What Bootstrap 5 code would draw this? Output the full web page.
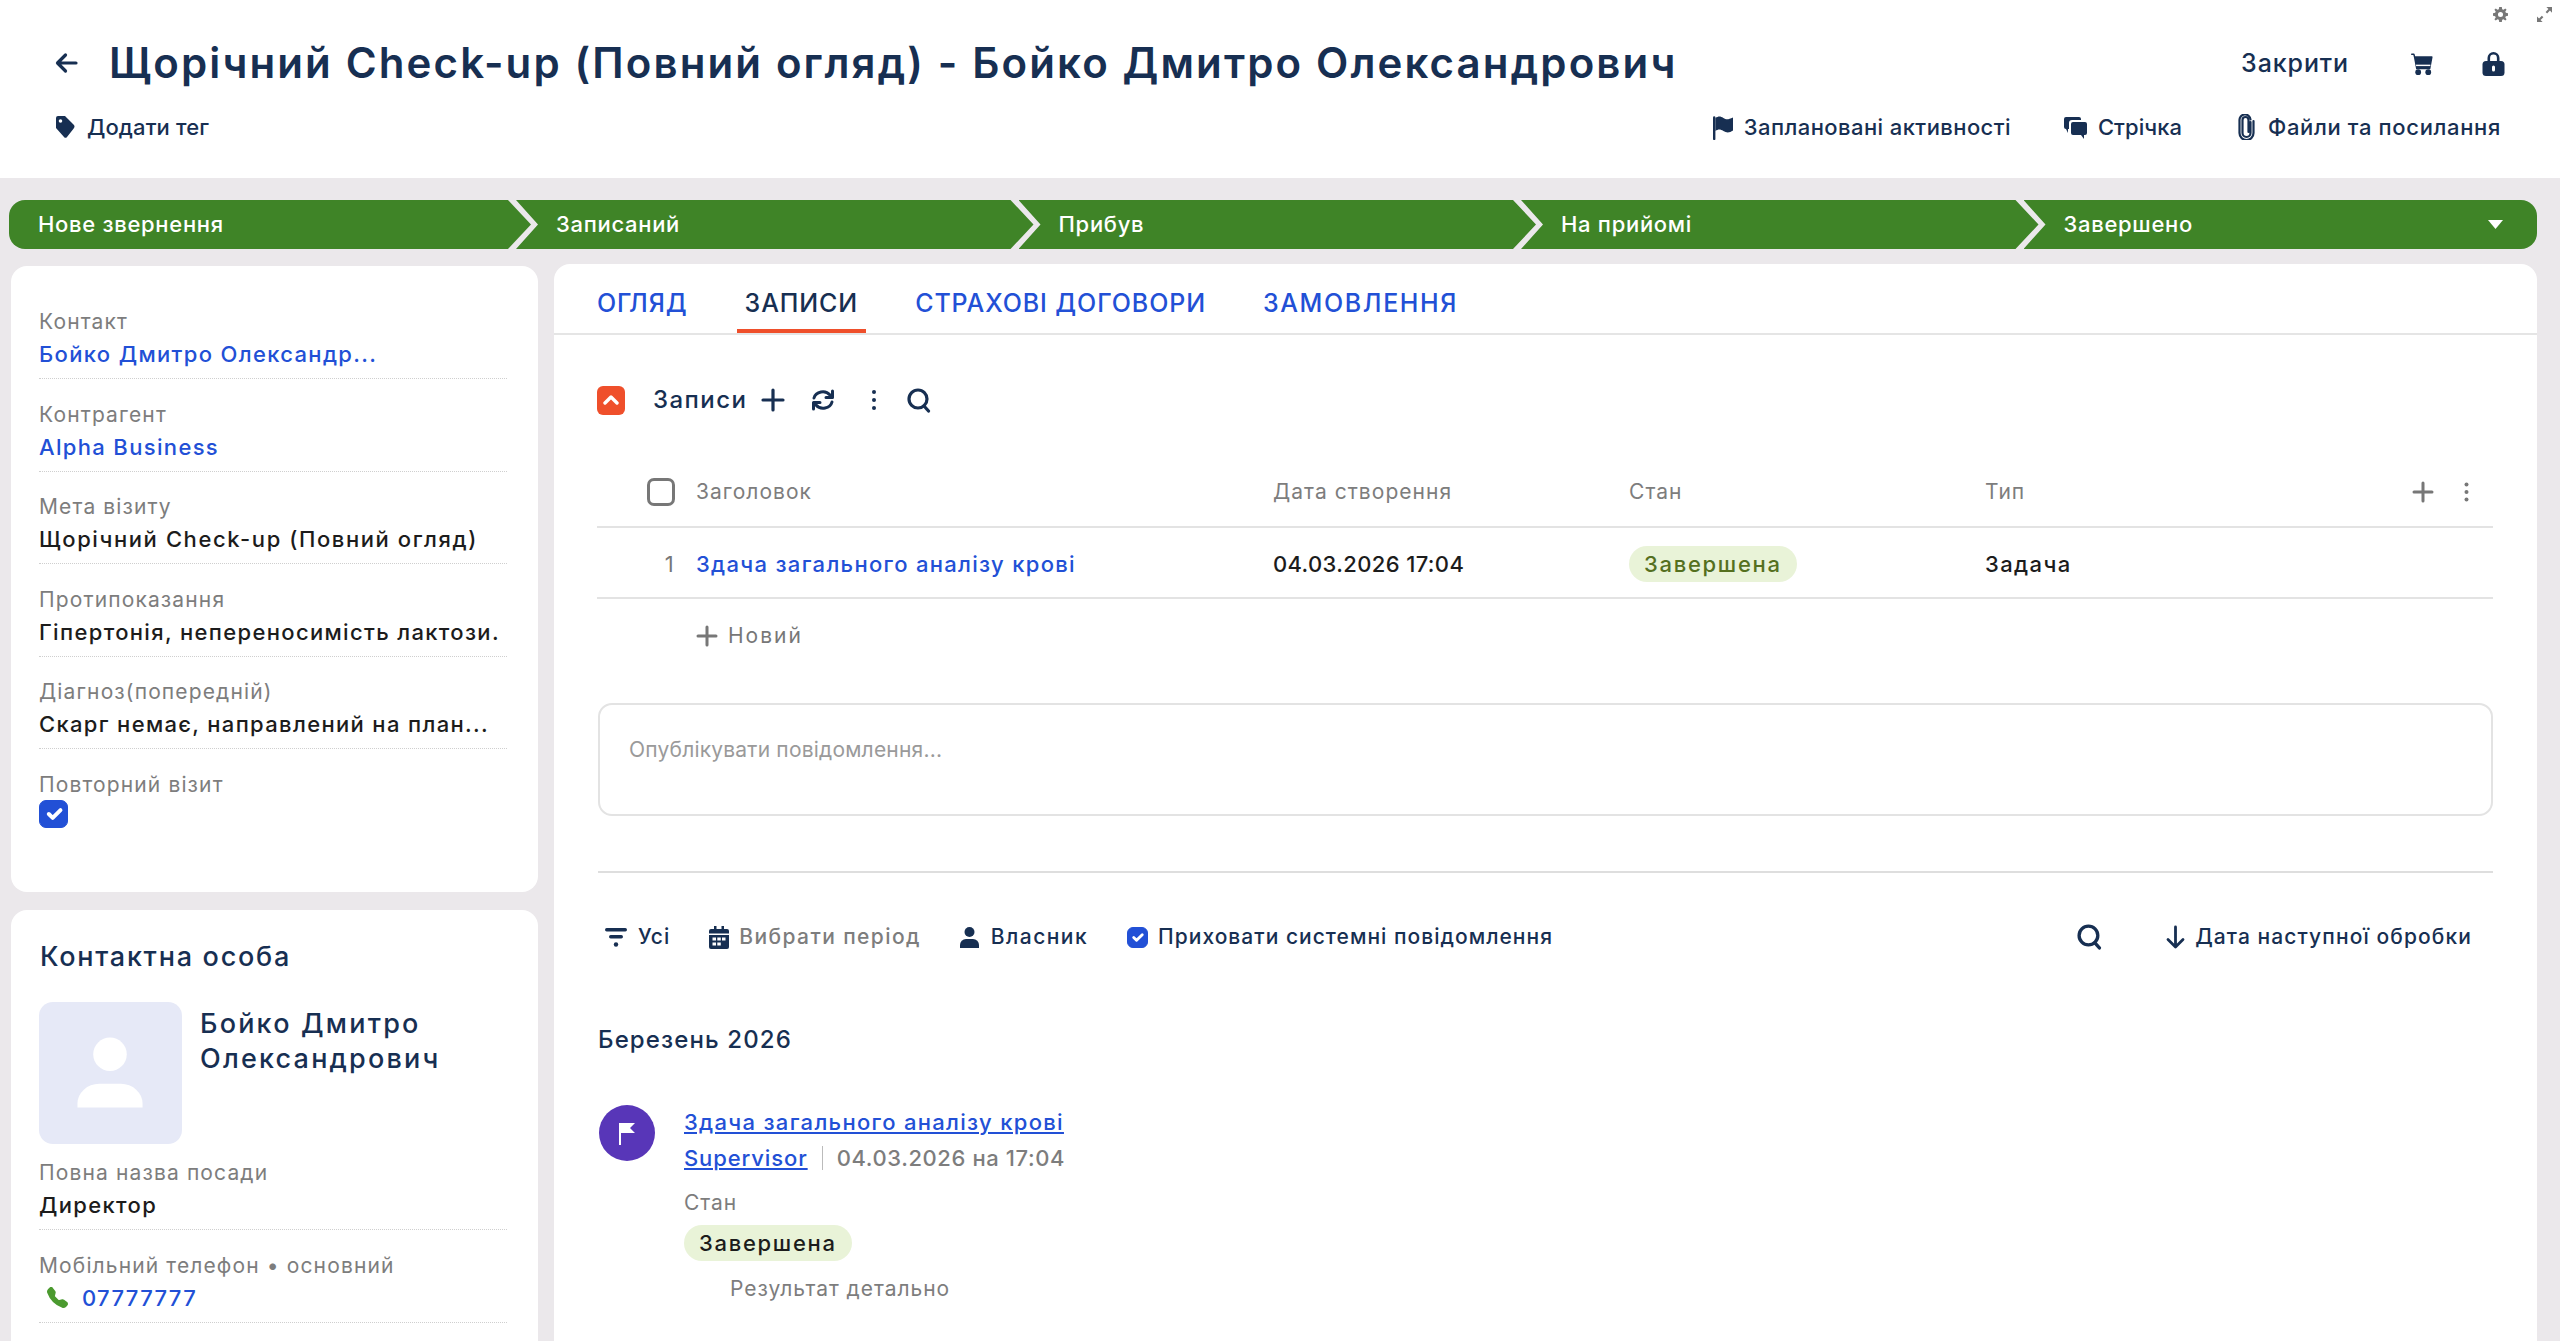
<!DOCTYPE html>
<html lang="uk">
<head>
  <meta charset="UTF-8">
  <title>Щорічний Check-up</title>
  <link href="https://cdn.jsdelivr.net/npm/bootstrap@5.3.0/dist/css/bootstrap.min.css" rel="stylesheet">
  <style>
    html, body { height: 100%; }
    body { font-family: Inter, "Liberation Sans", sans-serif; background: #ebe8eb; color: #172f52; overflow: hidden; }
    a { color: #2250d6; }
    svg { display: block; flex: none; }

    .page-head { background: #fff; height: 178px; padding: 38px 55px 0; position: relative; }
    .corner-tools { position: absolute; top: 7px; right: 8px; display: flex; gap: 29px; }
    .head-top { height: 50px; }
    .head-title { font-size: 42px; font-weight: 600; letter-spacing: 2.13px; margin: 0 0 0 31px; color: #172f52; white-space: nowrap; }
    .head-close { font-size: 25px; font-weight: 500; letter-spacing: .9px; margin-left: auto; margin-right: 62px; padding-top: 2px; }
    .head-sub { height: 40px; margin-top: 19px; padding-right: 4px; font-size: 22px; font-weight: 500; }
    .head-act { display: flex; align-items: center; gap: 11px; }
    .head-files { gap: 13px; }
    .ls-tag { margin-left: 1px; letter-spacing: .1px; }
    .ls-plan { letter-spacing: .42px; margin-right: 53px; }
    .ls-feed { letter-spacing: .04px; margin-right: 56px; }
    .ls-files { letter-spacing: .65px; }

    .stage-bar { padding: 22px 23px 0 9px; height: 71px; flex: none; }
    .stage { height: 49px; width: 517.5px; flex: none; margin-left: -15px; background: #3f8427; color: #fff; font-size: 22px; font-weight: 500; letter-spacing: .7px; padding-left: 40px;
      clip-path: polygon(0 0, calc(100% - 23px) 0, 100% 50%, calc(100% - 23px) 100%, 0 100%, 22px 50%); }
    .stage-first { margin-left: 0; width: 522px; border-radius: 16px 0 0 16px; padding-left: 29px; clip-path: polygon(0 0, calc(100% - 23px) 0, 100% 50%, calc(100% - 23px) 100%, 0 100%); }
    .stage-last { flex: 1; width: auto; border-radius: 0 16px 16px 0; padding-right: 34px; clip-path: polygon(0 0, 100% 0, 100% 100%, 0 100%, 22px 50%); }

    .work { flex: 1; min-height: 0; padding: 15px 23px 0 11px; gap: 16px; }
    .side { width: 527px; flex: none; margin-top: 2px; gap: 18px; }
    .side-card { background: #fff; border-radius: 16px; padding: 0 31px 0 28px; }
    .side-main { height: 626px; padding-top: 42px; flex: none; }
    .side-person { flex: 1; padding-top: 29px; border-radius: 16px 16px 0 0; }
    .field { border-bottom: 1px dotted #cfcfcf; margin-bottom: 21.6px; padding-bottom: 8px; }
    .field-label { height: 28px; line-height: 28px; font-size: 21px; letter-spacing: 1.13px; color: #7d7d7d; white-space: nowrap; }
    .field-value { height: 32px; line-height: 32px; margin-top: 2px; font-size: 22px; font-weight: 500; letter-spacing: 1.34px; color: #1c1c1c; white-space: nowrap; }
    .field-value a { text-decoration: none; }
    .ls-goal { letter-spacing: 1.59px; }
    .form-check-input.repeat-check { width: 29px; height: 28px; margin: 1px 0 0; border-radius: 7px; background-color: #2250d6; border-color: #2250d6; display: block; }
    .person-head { font-size: 27px; font-weight: 500; letter-spacing: 1.73px; height: 36px; line-height: 36px; margin: 0 0 27px 1px; color: #172f52; }
    .person-photo { width: 143px; height: 142px; background: #e6e9f7; border-radius: 14px; flex: none; }
    .person-name { font-size: 27px; font-weight: 500; letter-spacing: 2.2px; line-height: 35px; margin: 4px 0 0 18px; color: #172f52; }
    .person-row { margin-bottom: 15px; }
    .phone-link { margin-left: 8px; gap: 14px; }

    .main-card { background: #fff; flex: 1; min-width: 0; border-radius: 16px 16px 0 0; }
    .tab-strip { padding-left: 35px; gap: 41px; border-bottom: 2px solid #e5e5e5; height: 71px; flex-wrap: nowrap; }
    .tab-strip .nav-link { color: #2250d6; font-size: 25px; font-weight: 500; letter-spacing: .9px; line-height: 36px; padding: 21px 8px 8px; border-bottom: 4px solid transparent; }
    .tab-strip .nav-link.active { color: #172f52; border-bottom-color: #ef4f2b; }
    .tab-strip .nav-link.ls-wide { letter-spacing: 1.6px; }
    .main-body { padding: 45px 44px 0 43px; }

    .rec-bar { height: 40px; font-size: 24px; font-weight: 500; letter-spacing: 1.46px; margin-bottom: 37px; }
    .rec-toggle { width: 28px; height: 29px; background: #ef4f2b; border-radius: 6px; margin-right: 28px; }
    .rec-plus { margin-left: 14px; }
    .rec-sync { margin-left: 26px; }
    .rec-dots { margin-left: 36px; }
    .rec-find { margin-left: 30px; }

    .rec-table { table-layout: fixed; margin: 0; }
    .table.rec-table > * > * > * { border-color: #e3e3e3; border-bottom-width: 2px; padding: 0; vertical-align: top; color: #1c1c1c; line-height: 36px; }
    .table.rec-table > thead > tr > th { height: 70px; padding-top: 17px; font-size: 21px; font-weight: 400; letter-spacing: 1.04px; color: #7d7d7d; }
    .table.rec-table > tbody > tr > td { height: 71px; padding-top: 18px; font-size: 22px; font-weight: 500; letter-spacing: .36px; }
    .table.rec-table > tbody > tr > td.row-type { letter-spacing: 1.4px; }
    .col-num { width: 99px; }
    .col-title { width: 577px; }
    .col-date, .col-state { width: 356px; }
    .form-check-input.all-check { width: 28px; height: 28px; margin: 4px 0 0 50px; border: 3px solid #777; border-radius: 7px; display: block; }
    .table.rec-table > tbody > tr > td.row-num { color: #777; font-weight: 400; padding-right: 22px; text-align: right; }
    .row-link { text-decoration: none; letter-spacing: 1.31px; }
    .state-pill { display: inline-block; height: 36px; line-height: 36px; padding: 0 15px; background: #e9f3d8; letter-spacing: 1.7px; font-size: 22px; font-weight: 500; vertical-align: top; }
    .rec-table td .state-pill { color: #55701f; }
    .head-tools { padding-right: 24px; gap: 24px; }
    .head-icons { gap: 30px; }
    .rec-new { height: 74px; margin-bottom: 30px; padding-left: 99px; gap: 10px; font-size: 21px; letter-spacing: 2px; color: #777; }

    .post-box { height: 113px; width: calc(100% - 1px); margin-left: 1px; border: 2px solid #e3e3e3; border-radius: 14px; padding: 30px 29px 0; font-size: 21px; line-height: 30px; letter-spacing: .2px; resize: none; }
    .post-box::placeholder { color: #9a9a9a; }
    .feed-rule { margin: 55px 0 44px 1px; border-top: 2px solid #dedede; opacity: 1; }

    .feed-filters { height: 40px; padding-left: 7px; font-size: 21px; font-weight: 500; letter-spacing: 1.02px; margin-bottom: 65px; white-space: nowrap; }
    .feed-filter { gap: 10px; margin-right: 39px; }
    .feed-owner { gap: 12px; letter-spacing: 1.45px; }
    .feed-muted { color: #7d7d7d; letter-spacing: 1.4px; }
    .form-check-input.hide-check { width: 21px; height: 21px; margin: 0; border-radius: 6px; background-color: #2250d6; border-color: #2250d6; }
    .feed-sort { gap: 10px; margin-left: 64px; margin-right: 21px; letter-spacing: 1.1px; }
    .feed-month { height: 36px; line-height: 36px; margin-left: 1px; font-size: 24px; font-weight: 500; letter-spacing: 1.12px; margin-bottom: 47px; color: #172f52; }
    .feed-dot { width: 56px; height: 56px; background: #5836b8; margin: 0 29px 0 2px; flex: none; }
    .feed-line { height: 35px; line-height: 34px; font-size: 22px; font-weight: 500; letter-spacing: 1.31px; white-space: nowrap; }
    .feed-user { letter-spacing: .9px; }
    .feed-sep { border-left: 1px solid #bbb; height: 24px; margin: 0 14px; }
    .feed-date { color: #7d7d7d; letter-spacing: .6px; }
    .feed-caption { height: 28px; line-height: 28px; font-size: 21px; letter-spacing: .95px; color: #7d7d7d; margin-top: 14px; }
    .feed-pill { margin-top: 8px; color: #1c1c1c; }
    .feed-detail { margin-left: 46px; }
  </style>
</head>
<body class="d-flex flex-column">
  <header class="page-head">
    <div class="corner-tools">
      <svg width="15" height="15" viewBox="0 0 16 16" fill="#777"><path d="M9.4 0 9.8 2.3 11.2 2.9 13.100 1.500 14.500 2.900 13.100 4.800 13.700 6.200 16 6.600V9.400L13.700 9.800 13.100 11.200 14.500 13.100 13.100 14.500 11.200 13.100 9.800 13.700 9.400 16H6.600L6.200 13.700 4.800 13.100 2.900 14.500 1.500 13.100 2.900 11.200 2.300 9.800 0 9.400V6.600L2.300 6.200 2.900 4.800 1.500 2.900 2.900 1.500 4.800 2.900 6.200 2.300 6.600 0ZM8 5.300A2.700 2.700 0 1 0 8 10.700 2.700 2.700 0 0 0 8 5.300Z"/></svg>
      <svg width="15" height="15" viewBox="0 0 16 16" fill="#777"><path d="M10 0h6v6l-2.200-2.200-3 3-1.600-1.600 3-3zM0 16v-6l2.200 2.200 3-3 1.600 1.600-3 3L6 16z"/></svg>
    </div>
    <div class="head-top d-flex align-items-center">
      <svg width="23" height="22" viewBox="0 0 23 22" fill="none" stroke="#172f52" stroke-width="3.200" stroke-linecap="round" stroke-linejoin="round"><path d="M21 11H3M10.500 3 2.500 11l8 8"/></svg>
      <h1 class="head-title">Щорічний Check-up (Повний огляд) - Бойко Дмитро Олександрович</h1>
      <span class="head-close">Закрити</span>
      <svg width="23" height="23" viewBox="0 0 16 16" fill="#172f52" class="me-5"><path d="M0 1.500A.5.5 0 0 1 .5 1H2a.5.5 0 0 1 .485.379L2.890 3H14.500a.5.5 0 0 1 .491.592l-1.500 8A.5.5 0 0 1 13 12H4a.5.5 0 0 1-.491-.408L2.010 3.607 1.610 2H.5a.5.5 0 0 1-.5-.5z"/><circle cx="5" cy="14" r="2"/><circle cx="12" cy="14" r="2"/><path d="M3.500 9.300h10" stroke="#fff" stroke-width="1"/></svg>
      <svg width="23" height="25" viewBox="0 0 23 25" fill="#172f52"><path d="M5.500 11V7a6 6 0 0 1 12 0v4h-2.600V7a3.400 3.400 0 0 0-6.800 0v4z"/><rect x="0.500" y="10" width="22" height="15" rx="3.500"/><rect x="10" y="14.500" width="3" height="6" rx="1.500" fill="#fff"/></svg>
    </div>
    <div class="head-sub d-flex align-items-center justify-content-between">
      <span class="head-act">
        <svg width="20" height="24" viewBox="0 0 20 24" fill="#172f52"><path d="M1 3a2 2 0 0 1 2-2h7l8.500 8.500a3 3 0 0 1 0 4.200L12 22a2 2 0 0 1-3 0L1 13zM5.500 4.200a1.800 1.800 0 1 0 0 3.600 1.800 1.800 0 0 0 0-3.600z"/></svg>
        <span class="ls-tag">Додати тег</span>
      </span>
      <span class="d-flex">
        <span class="head-act">
          <svg width="20" height="25" viewBox="0 0 20 25" fill="#172f52"><path d="M0 2.500a1.200 1.200 0 0 1 2.400 0V24a1.200 1.200 0 0 1-2.400 0z"/><path d="M2.400 3c3-2 5-2 8 0s5 1.500 9.600-.5v13c-3.500 2.500-6.500 2.500-9.600.5s-5.200-2-8 0z"/></svg>
          <span class="ls-plan">Заплановані активності</span>
        </span>
        <span class="head-act">
          <svg width="23" height="24" viewBox="0 0 23 24" fill="#172f52"><path d="M2 2h13a2 2 0 0 1 2 2v1H8a3 3 0 0 0-3 3v6H4v4l-2-4a2 2 0 0 1-2-2V4a2 2 0 0 1 2-2z"/><path d="M9 7h12a2 2 0 0 1 2 2v9a2 2 0 0 1-2 2h-1v4l-3-4H9a2 2 0 0 1-2-2V9a2 2 0 0 1 2-2z"/></svg>
          <span class="ls-feed">Стрічка</span>
        </span>
        <span class="head-act head-files">
          <svg width="17" height="26" viewBox="0 0 17 26" fill="none" stroke="#172f52" stroke-width="2.200" stroke-linecap="round"><path d="M12.500 8v11a4 4 0 0 1-8 0V6a3 3 0 0 1 6 0v12"/><path d="M15.500 7v12a7 7 0 0 1-14 0V6.500a5.500 5.500 0 0 1 11-1"/></svg>
          <span class="ls-files">Файли та посилання</span>
        </span>
      </span>
    </div>
  </header>

  <div class="stage-bar d-flex">
    <div class="stage stage-first d-flex align-items-center">Нове звернення</div>
    <div class="stage d-flex align-items-center">Записаний</div>
    <div class="stage d-flex align-items-center">Прибув</div>
    <div class="stage d-flex align-items-center">На прийомі</div>
    <div class="stage stage-last d-flex align-items-center justify-content-between">Завершено
      <svg width="15" height="9" viewBox="0 0 15 9" fill="#fff"><path d="M0 0h15L7.500 9z"/></svg>
    </div>
  </div>

  <div class="work d-flex">
    <aside class="side d-flex flex-column">
      <div class="side-card side-main">
        <div class="field"><div class="field-label">Контакт</div><div class="field-value"><a href="#">Бойко Дмитро Олександр...</a></div></div>
        <div class="field"><div class="field-label">Контрагент</div><div class="field-value"><a href="#">Alpha Business</a></div></div>
        <div class="field"><div class="field-label">Мета візиту</div><div class="field-value ls-goal">Щорічний Check-up (Повний огляд)</div></div>
        <div class="field"><div class="field-label">Протипоказання</div><div class="field-value">Гіпертонія, непереносимість лактози.</div></div>
        <div class="field"><div class="field-label">Діагноз(попередній)</div><div class="field-value">Скарг немає, направлений на план...</div></div>
        <div class="field-label">Повторний візит</div>
        <input class="form-check-input repeat-check" type="checkbox" checked>
      </div>
      <div class="side-card side-person">
        <h2 class="person-head">Контактна особа</h2>
        <div class="d-flex person-row">
          <div class="person-photo">
            <svg width="143" height="142" viewBox="0 0 145 142" fill="#fff"><ellipse cx="72" cy="52" rx="17" ry="17"/><path d="M39 106v-4a22 20 0 0 1 22-20h22a22 20 0 0 1 22 20v4z"/></svg>
          </div>
          <div class="person-name">Бойко Дмитро<br>Олександрович</div>
        </div>
        <div class="field"><div class="field-label">Повна назва посади</div><div class="field-value">Директор</div></div>
        <div class="field"><div class="field-label">Мобільний телефон • основний</div>
          <div class="field-value d-flex align-items-center phone-link">
            <svg width="21" height="21" viewBox="0 0 16 16" fill="#4b9a2f"><path d="M1.885.511a1.745 1.745 0 0 1 2.610.163L6.290 2.980c.329.423.445.974.315 1.494l-.547 2.190a.678.678 0 0 0 .178.643l2.457 2.457a.678.678 0 0 0 .644.178l2.189-.547a1.745 1.745 0 0 1 1.494.315l2.306 1.794c.829.645.905 1.870.163 2.611l-1.034 1.034c-.740.740-1.846 1.065-2.877.702a18.634 18.634 0 0 1-7.010-4.420 18.634 18.634 0 0 1-4.420-7.009c-.362-1.030-.037-2.137.703-2.877L1.885.511z"/></svg>
            <a href="#">07777777</a>
          </div>
        </div>
      </div>
    </aside>

    <section class="main-card">
      <ul class="nav tab-strip">
        <li class="nav-item"><a class="nav-link" href="#">ОГЛЯД</a></li>
        <li class="nav-item"><a class="nav-link active" href="#">ЗАПИСИ</a></li>
        <li class="nav-item"><a class="nav-link" href="#">СТРАХОВІ ДОГОВОРИ</a></li>
        <li class="nav-item"><a class="nav-link ls-wide" href="#">ЗАМОВЛЕННЯ</a></li>
      </ul>
      <div class="main-body">
        <div class="rec-bar d-flex align-items-center">
          <span class="rec-toggle d-flex align-items-center justify-content-center">
            <svg width="16" height="10" viewBox="0 0 16 10" fill="none" stroke="#fff" stroke-width="3.400" stroke-linecap="round" stroke-linejoin="round"><path d="M2 8l6-6 6 6"/></svg>
          </span>
          Записи
          <svg class="rec-plus" width="24" height="24" viewBox="0 0 24 24" stroke="#172f52" stroke-width="3.200" stroke-linecap="round"><path d="M12 2v20M2 12h20"/></svg>
          <svg class="rec-sync" width="24" height="24" viewBox="0 0 24 24" fill="none" stroke="#172f52" stroke-width="3" stroke-linecap="round" stroke-linejoin="round"><path d="M3 10a9 8 0 0 1 16-3l2 2"/><path d="M21 14a9 8 0 0 1-16 3l-2-2"/><path d="M21.500 3v6.500H15M2.500 21v-6.500H9"/></svg>
          <svg class="rec-dots" width="6" height="24" viewBox="0 0 6 24" fill="#172f52"><circle cx="3" cy="4" r="2"/><circle cx="3" cy="12" r="2"/><circle cx="3" cy="20" r="2"/></svg>
          <svg class="rec-find" width="24" height="25" viewBox="0 0 24 25" fill="none" stroke="#172f52" stroke-width="3.200" stroke-linecap="round"><circle cx="11" cy="11" r="9"/><path d="M17 18l4.500 5"/></svg>
        </div>

        <table class="table rec-table">
          <thead>
            <tr>
              <th class="col-num"><input class="form-check-input all-check" type="checkbox"></th>
              <th class="col-title">Заголовок</th>
              <th class="col-date">Дата створення</th>
              <th class="col-state">Стан</th>
              <th>
                <div class="d-flex justify-content-between align-items-center head-tools">
                  <span>Тип</span>
                  <span class="d-flex align-items-center head-icons">
                    <svg width="22" height="22" viewBox="0 0 22 22" stroke="#777" stroke-width="3" stroke-linecap="round"><path d="M11 2v18M2 11h18"/></svg>
                    <svg width="5" height="20" viewBox="0 0 5 20" fill="#777"><circle cx="2.500" cy="2.500" r="2"/><circle cx="2.500" cy="10" r="2"/><circle cx="2.500" cy="17.500" r="2"/></svg>
                  </span>
                </div>
              </th>
            </tr>
          </thead>
          <tbody>
            <tr>
              <td class="row-num">1</td>
              <td><a class="row-link" href="#">Здача загального аналізу крові</a></td>
              <td>04.03.2026 17:04</td>
              <td><span class="state-pill rounded-pill">Завершена</span></td>
              <td class="row-type">Задача</td>
            </tr>
          </tbody>
        </table>
        <div class="rec-new d-flex align-items-center">
          <svg width="22" height="22" viewBox="0 0 22 22" stroke="#777" stroke-width="3" stroke-linecap="round"><path d="M11 2v18M2 11h18"/></svg>
          Новий
        </div>

        <textarea class="form-control post-box" placeholder="Опублікувати повідомлення..."></textarea>
        <hr class="feed-rule">

        <div class="feed-filters d-flex align-items-center">
          <span class="feed-filter d-flex align-items-center">
            <svg width="24" height="21" viewBox="0 0 24 21" fill="#172f52"><rect x="1" y="1" width="22" height="3.500" rx="1.700"/><rect x="5" y="8" width="14" height="3.500" rx="1.700"/><circle cx="12" cy="17.500" r="2.200"/></svg>
            Усі
          </span>
          <span class="feed-filter d-flex align-items-center feed-muted">
            <svg width="20" height="23" viewBox="0 0 20 23" fill="#172f52"><path d="M5 0h2.500v3h5V0H15v3h3a2 2 0 0 1 2 2v2.500H0V5a2 2 0 0 1 2-2h3z"/><path d="M0 9h20v12a2 2 0 0 1-2 2H2a2 2 0 0 1-2-2z"/><path d="M3.500 11.500h3.500v3H3.500zM8.300 11.500h3.500v3H8.300zM13 11.500h3.500v3H13zM3.500 16.500h3.500v3H3.500zM8.300 16.500h3.500v3H8.300z" fill="#fff"/></svg>
            Вибрати період
          </span>
          <span class="feed-filter d-flex align-items-center feed-owner">
            <svg width="19" height="21" viewBox="0 0 19 21" fill="#172f52"><circle cx="9.500" cy="5" r="5"/><path d="M0 21v-3a6 6 0 0 1 6-6h7a6 6 0 0 1 6 6v3z"/></svg>
            Власник
          </span>
          <span class="feed-filter d-flex align-items-center">
            <input class="form-check-input hide-check" type="checkbox" checked>
            Приховати системні повідомлення
          </span>
          <span class="ms-auto d-flex align-items-center">
            <svg width="25" height="26" viewBox="0 0 24 25" fill="none" stroke="#172f52" stroke-width="3.200" stroke-linecap="round"><circle cx="11" cy="11" r="9"/><path d="M17 18l4.500 5"/></svg>
          </span>
          <span class="feed-sort d-flex align-items-center">
            <svg width="19" height="24" viewBox="0 0 19 24" fill="none" stroke="#172f52" stroke-width="2.800" stroke-linecap="round" stroke-linejoin="round"><path d="M9.500 2v20M2 14.500 9.500 22 17 14.500"/></svg>
            Дата наступної обробки
          </span>
        </div>

        <div class="feed-month">Березень 2026</div>
        <div class="d-flex">
          <span class="feed-dot rounded-circle d-flex align-items-center justify-content-center">
            <svg width="20" height="26" viewBox="0 0 20 26" fill="#fff"><path d="M2 3h16l-5 5 5 5H4v12H2z"/></svg>
          </span>
          <div>
            <div class="feed-line"><a href="#">Здача загального аналізу крові</a></div>
            <div class="feed-line d-flex align-items-center"><a href="#" class="feed-user">Supervisor</a><span class="feed-sep"></span><span class="feed-date">04.03.2026 на 17:04</span></div>
            <div class="feed-caption">Стан</div>
            <span class="state-pill rounded-pill feed-pill">Завершена</span>
            <div class="feed-caption feed-detail">Результат детально</div>
          </div>
        </div>
      </div>
    </section>
  </div>
</body>
</html>
